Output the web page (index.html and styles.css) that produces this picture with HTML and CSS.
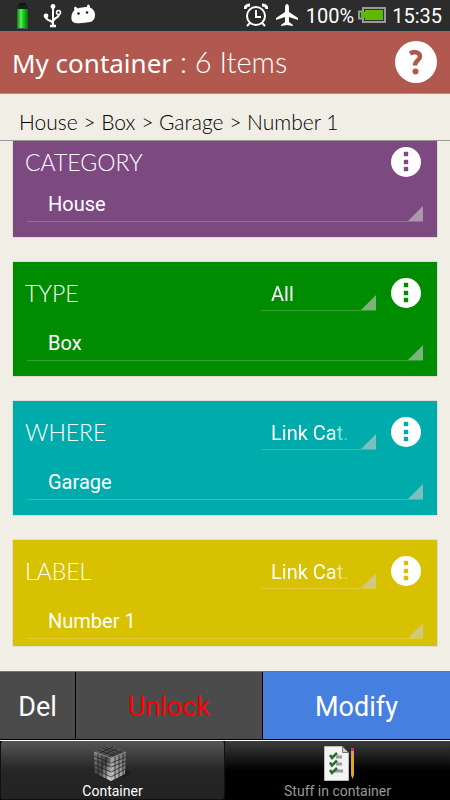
FILE: index.html
```html
<!DOCTYPE html>
<html lang="en">
<head>
<meta charset="utf-8">
<meta name="viewport" content="width=device-width, initial-scale=1">
<title>My container</title>
<link rel="stylesheet" href="styles.css">
</head>
<body>
<svg width="0" height="0" class="defs" aria-hidden="true">
  <symbol id="dots" viewBox="0 0 30 30">
    <circle cx="15" cy="15" r="15" fill="#fff"/>
    <path d="M13 5h4v4h-4zM13 13h4v4h-4zM13 20h4v4h-4z" fill="currentColor" stroke="currentColor" stroke-opacity=".4"/>
  </symbol>
</svg>
<div class="screen">
  <div class="status">
    <svg width="14" height="28" viewBox="0 0 14 28">
      <defs><linearGradient id="cell"><stop offset="0" stop-color="#0b7d10"/><stop offset=".35" stop-color="#5af05a"/><stop offset=".6" stop-color="#12c916"/><stop offset="1" stop-color="#0a6d0d"/></linearGradient></defs>
      <rect x="3" y="2" width="7" height="3" fill="#111"/>
      <rect x="1" y="4" width="11" height="5" rx="1" fill="#10251a"/>
      <rect x="1" y="8" width="11" height="19" fill="url(#cell)"/>
      <rect x="1" y="27" width="11" height="1" fill="#555"/>
    </svg>
    <svg class="usb" width="20" height="26" viewBox="0 0 20 26" fill="none" stroke="#fff" stroke-width="2">
      <path d="M11 4v19M3.500 14c0 6 7.500 3 7.500 8M17 12c0 5-6 3-6 8"/>
      <circle cx="11" cy="4.500" r="2.400" fill="#fff" stroke="none"/><circle cx="4" cy="14" r="2.400" fill="#fff" stroke="none"/><circle cx="16.500" cy="10.500" r="2" stroke-width="1.500"/><path d="M8 24h6" stroke-width="2.500"/>
    </svg>
    <svg class="droid" width="24" height="22" viewBox="0 0 24 22">
      <path d="M3.500 6C2 2.500 5 1.500 6.500 4.500c3-1 7-1.500 9.500-1.500 0-3.500 3-3 3 .5 4 2 5 4.500 5 7.500 0 4-2 6.500-5 7-5 1-10 1.500-15 1C1 18.500 0 16 .5 12c.2-2 1-4 3-6z" fill="#fff"/>
      <circle cx="7.500" cy="9.500" r="1.300" fill="#222"/><circle cx="16" cy="8.500" r="1.300" fill="#222"/>
    </svg>
    <span class="grow"></span>
    <svg width="24" height="24" viewBox="0 0 24 24" fill="none" stroke="#fff" stroke-width="2">
      <circle cx="12" cy="13" r="9"/><path d="M12 7v7h5M6 20l-3 3M18 20l3 3"/><path d="M1 6c0-3 3-4 5-4M23 6c0-3-3-4-5-4" stroke-width="3"/>
    </svg>
    <svg class="plane" width="22" height="24" viewBox="0 0 22 24">
      <path d="M11 1c1 0 2 1 2 4v4l9 6v2l-9-3v5l4 3v1l-6-1-6 1v-1l4-3v-5l-9 3v-2l9-6V5c0-3 1-4 2-4z" fill="#fff"/>
    </svg>
    <span>100%</span>
    <svg width="28" height="18" viewBox="0 0 28 18">
      <path d="M5 2h22v14H5v-3.500H1v-7h4z" fill="#333" stroke="#999" stroke-width="2"/>
      <path d="M7 4h18v10H7v-2H3V6h4z" fill="#61b800"/>
    </svg>
    <time class="clock">15:35</time>
  </div>

  <header class="header">
    <h1><b>My container</b> : 6 Items</h1>
    <button class="help" aria-label="Help">
      <svg width="42" height="42" viewBox="0 0 42 42">
        <circle cx="21" cy="21" r="21" fill="#fff"/>
        <path d="M15 12.500C19 10 25 11 25 15.500c0 4-5 4-5 9" fill="none" stroke="#b1584f" stroke-width="4.500"/>
        <circle cx="20.500" cy="30.500" r="3" fill="#b1584f"/>
      </svg>
    </button>
  </header>

  <nav class="crumbs">House &gt; Box &gt; Garage &gt; Number 1</nav>

  <main class="cards">
    <section class="card category">
      <div class="head">
        <label class="name" for="category">CATEGORY</label>
        <button class="more" aria-label="Category options"><svg><use href="#dots"/></svg></button>
      </div>
      <div class="field"><select id="category"><option>House</option></select></div>
    </section>
    <section class="card type">
      <div class="head">
        <label class="name" for="type">TYPE</label>
        <div class="field filter"><select aria-label="Type filter"><option>All</option></select></div>
        <button class="more" aria-label="Type options"><svg><use href="#dots"/></svg></button>
      </div>
      <div class="field"><select id="type"><option>Box</option></select></div>
    </section>
    <section class="card where">
      <div class="head">
        <label class="name" for="where">WHERE</label>
        <div class="field filter"><select aria-label="Where filter"><option>Link Cat.</option></select></div>
        <button class="more" aria-label="Where options"><svg><use href="#dots"/></svg></button>
      </div>
      <div class="field"><select id="where"><option>Garage</option></select></div>
    </section>
    <section class="card label">
      <div class="head">
        <label class="name" for="label">LABEL</label>
        <div class="field filter"><select aria-label="Label filter"><option>Link Cat.</option></select></div>
        <button class="more" aria-label="Label options"><svg><use href="#dots"/></svg></button>
      </div>
      <div class="field"><select id="label"><option>Number 1</option></select></div>
    </section>
  </main>

  <div class="actions">
    <button>Del</button>
    <button class="unlock">Unlock</button>
    <button class="modify">Modify</button>
  </div>

  <nav class="tabs">
    <button class="active">
      <svg width="40" height="40" viewBox="0 0 40 40">
        <defs>
          <linearGradient id="left" x2="1" y2="1"><stop offset="0" stop-color="#888"/><stop offset=".5" stop-color="#444"/><stop offset="1" stop-color="#eee"/></linearGradient>
          <linearGradient id="right" x1="0" y1="1" x2="1" y2="0"><stop offset="0" stop-color="#ccc"/><stop offset="1" stop-color="#666"/></linearGradient>
        </defs>
        <ellipse cx="29" cy="30" rx="8" ry="4" fill="#111" opacity=".5"/>
        <path d="M1 9l17 6v23L2 30z" fill="url(#left)"/>
        <path d="M18 15l15-6-1 22-14 7z" fill="url(#right)"/>
        <path d="M1 9l15-7 17 7-15 6z" fill="#555"/>
        <path d="M1 13l17 7 15-6M1 17l17 7 15-6M2 22l16 7 14-7M2 26l16 8 14-8M5 10v22M9 12v22M13 13v23M22 13v23M26 12v22M30 10v22M5 7l17 6M9 5l17 7M12 4l17 6M5 11l15-7M10 12l14-6M14 14l15-6" fill="none" stroke="#222" stroke-width=".8"/>
        <path d="M1 9l17 6 15-6M18 15v23" fill="none" stroke="#999" stroke-width=".8"/>
      </svg>
      <span>Container</span>
    </button>
    <button>
      <svg width="40" height="40" viewBox="0 0 40 40">
        <path d="M6.500 3.500h18l6 6v28h-24z" fill="#f3f3f3" stroke="#bbb"/>
        <path d="M24.500 3.500v6h6z" fill="#ccc" stroke="#777"/>
        <path d="M18 14h6M18 21h6M17 28h8" stroke="#999" stroke-width="3"/>
        <path d="M17 12h6M17 19h5" stroke="#ccc"/>
        <path d="M12 12l2 3 5-5M12 19.500l2 3 5-5M12 27l2 3 5-5" fill="none" stroke="#27702c" stroke-width="2.500"/>
        <path d="M33 9h3v23l-1.500 4-1.500-4z" fill="#e3a51b"/><path d="M33 5h3v3h-3z" fill="#b04545"/><path d="M33 8h3v2h-3z" fill="#aaa"/>
      </svg>
      <span>Stuff in container</span>
    </button>
  </nav>
</div>
</body>
</html>
```
FILE: styles.css
```css
* { box-sizing: border-box; }
body { margin: 0; background: #f1eee6; font-family: Roboto, sans-serif; color: #fff; }
button, select { font: inherit; color: inherit; border: 0; margin: 0; padding: 0; background: none; border-radius: 0; }
svg { display: block; flex: none; }
.defs { position: absolute; }
.screen { min-height: 100vh; display: flex; flex-direction: column; }

.status { display: flex; align-items: center; height: 31px; padding: 0 8px 0 16px; background: #2c2c2c; border-bottom: 1px solid #1c3436; font-size: 20px; line-height: 24px; gap: 4px; }
.status span, .clock { padding-top: 2px; }
.usb { margin-left: 8px; }
.droid { margin-left: 5px; }
.plane { margin: 0 4px; }
.grow { flex: 1; }
.clock { margin-left: 2px; }

.header { display: flex; align-items: center; justify-content: space-between; height: 63px; padding: 0 13px 0 12px; background: #b1584f; border-bottom: 1px solid #c6867e; }
h1 { margin: 0; font: 300 29px/36px Lato, sans-serif; }
h1 b { font-family: "Noto Sans", sans-serif; font-weight: 400; font-size: 26px; }

.crumbs { height: 47px; padding: 16px 19px 0; border-bottom: 1px solid #999; color: #000; font: 300 21px/24px Lato, sans-serif; }

.cards { flex: 1; display: flex; flex-direction: column; gap: 25px; padding: 0 13px 25px; }
.card { padding: 13px 14px 15px; box-shadow: 0 0 1px #888; }
.head { display: flex; align-items: center; height: 36px; }
.name { flex: 1; margin-left: -2px; font: 300 23px/28px Lato, sans-serif; }
.field { position: relative; border-bottom: 1px solid rgba(255, 255, 255, .2); }
.field::after { content: ""; position: absolute; right: 0; bottom: 0; width: 15px; height: 15px; background: rgba(205, 205, 205, .6); clip-path: polygon(100% 0, 100% 100%, 0 100%); }
.field select { display: block; width: 100%; height: 49px; padding: 14px 16px 0 21px; appearance: none; font-size: 20px; outline: 0; }
.field.filter { width: 115px; margin-right: 15px; }
.field.filter select { height: 35px; padding: 2px 26px 0 10px; -webkit-mask-image: linear-gradient(to right, #000 60%, transparent 80%); mask-image: linear-gradient(to right, #000 60%, transparent 80%); }
.more { width: 30px; height: 30px; margin-right: 2px; }
.more svg { width: 30px; height: 30px; }

.category { padding-top: 3px; background: #7c4a81; }
.category .field select { height: 41px; padding-top: 6px; }
.type { background: #008c00; }
.where { background: #00acab; }
.label { padding-bottom: 7px; background: #d7c100; }
.category .more { color: #7c4a81; }
.type .more { color: #008c00; }
.where .more { color: #00acab; }
.label .more { color: #d7c100; }

.actions { display: grid; grid-template-columns: 76fr 187fr 187fr; height: 69px; font-size: 27px; border-top: 1px solid #777; border-bottom: 1px solid #000; }
.actions button { padding-top: 2px; background: #4b4b4b; border-right: 1px solid #000; }
.actions .unlock { color: #f00; }
.actions .modify { background: #4580e1; border-right: 0; }

.tabs { display: grid; grid-template-columns: 1fr 1fr; height: 60px; border-top: 1px solid #fff; background: #000; font-size: 14px; }
.tabs button { display: flex; flex-direction: column; align-items: center; justify-content: flex-start; padding-top: 2px; color: #999; background: linear-gradient(#3c3c3c, #000 50%); }
.tabs .active { color: #fff; background: linear-gradient(#565656, #262626 50%, #222); border: 1px solid #111; border-top: 0; border-radius: 3px; }
.tabs span { line-height: 16px; }
```
